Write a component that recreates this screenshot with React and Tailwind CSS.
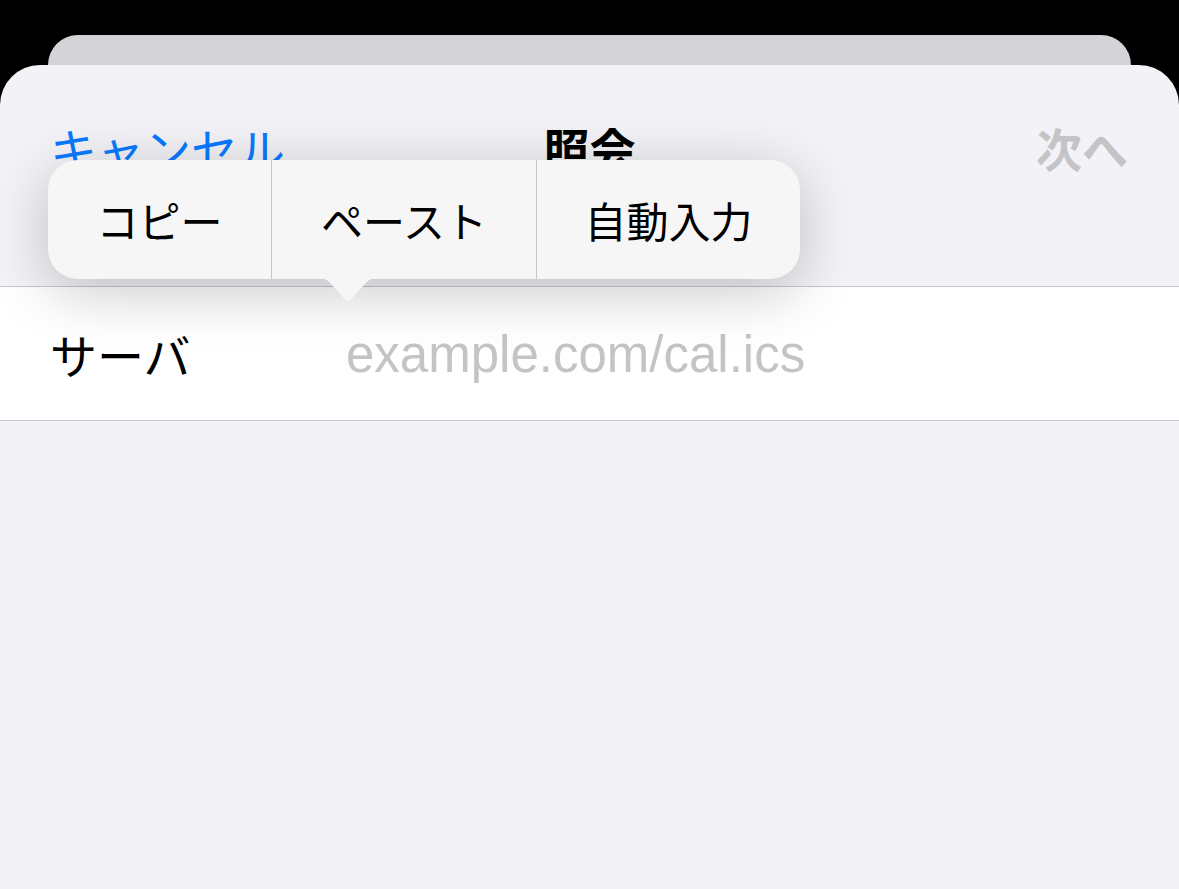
import React from 'react';

const jp = { fontFamily: '"Noto Sans CJK JP", "Noto Sans", sans-serif' };

function MenuArrow() {
  return (
    <svg width="64" height="24" viewBox="0 0 64 24" className="block">
      <path d="M0 0 H64 C56 0 52 2 49 6 L34.5 22 Q32 24.5 29.5 22 L15 6 C12 2 8 0 0 0 Z" fill="#f6f6f7" />
    </svg>
  );
}

export default function App() {
  const items = [
    { label: 'コピー', width: 'w-[223px]' },
    { label: 'ペースト', width: 'w-[265px]' },
    { label: '自動入力', width: 'w-[264px]' },
  ];

  return (
    <div className="h-[889px] w-[1179px] bg-black overflow-hidden flex flex-col pt-[35px]" style={jp}>
      <div className="mx-[48px] h-[30px] shrink-0 rounded-t-[30px] bg-[#d4d3d8]" />
      <div className="relative flex-1 rounded-t-[40px] bg-[#f2f2f7] flex flex-col">
        <div className="grid grid-cols-3 items-center h-[164px] px-[50px]">
          <div className="text-[47px] leading-none text-[#0a7aff]">キャンセル</div>
          <div className="text-center text-[46px] leading-none font-bold text-black">照会</div>
          <div className="text-right text-[46px] leading-none font-bold text-[#c4c4c6] pr-[1px]">次へ</div>
        </div>
        <div className="mt-[57px] border-t border-b border-[#c8c7cc] bg-white h-[135px] flex items-center px-[50px]">
          <div className="w-[296px] text-[47px] leading-none text-black">サーバ</div>
          <div
            className="text-[51px] leading-none text-[#c4c4c6] pt-[2px]"
            style={{ fontFamily: '"Liberation Sans", Arial, sans-serif' }}
          >
            example.com/cal.ics
          </div>
        </div>

        <div className="absolute left-[48px] top-[95px]">
          <div className="flex h-[119px] rounded-[30px] bg-[#f6f6f7] shadow-[0_12px_60px_rgba(0,0,0,0.22)] overflow-hidden">
            {items.map((item, i) => (
              <div
                key={item.label}
                className={`${item.width} flex items-center justify-center text-[42px] leading-none text-black ${i > 0 ? 'border-l border-[#c6c6c8]' : ''}`}
              >
                {item.label}
              </div>
            ))}
          </div>
          <div className="ml-[268px] -mt-[1px]">
            <MenuArrow />
          </div>
        </div>
      </div>
    </div>
  );
}
